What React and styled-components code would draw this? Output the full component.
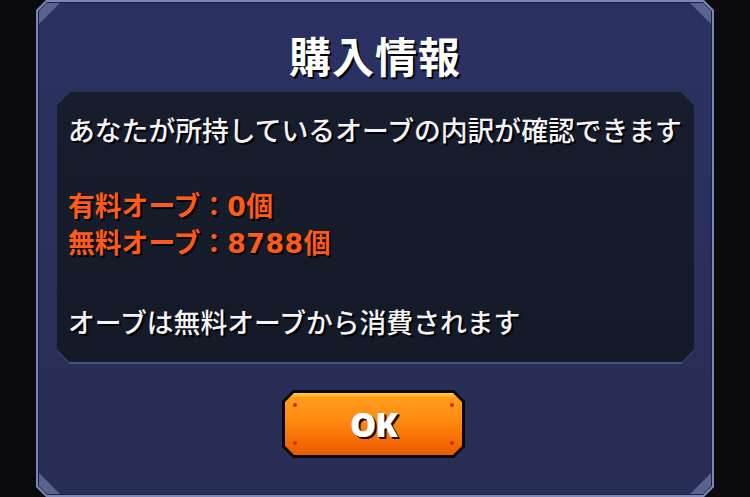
import React from 'react';
import styled, { createGlobalStyle } from 'styled-components';

const GlobalStyle = createGlobalStyle`
  html, body {
    margin: 0;
    padding: 0;
    background: #0c0c0e;
  }
  body {
    font-family: "Noto Sans CJK JP", "Noto Sans", sans-serif;
  }
`;

const chamfer = (n) =>
  `polygon(${n}px 0, calc(100% - ${n}px) 0, 100% ${n}px, 100% calc(100% - ${n}px), calc(100% - ${n}px) 100%, ${n}px 100%, 0 calc(100% - ${n}px), 0 ${n}px)`;

const Screen = styled.div`
  width: 750px;
  height: 497px;
  display: flex;
  justify-content: center;
  background: radial-gradient(ellipse at 50% 50%, #141416 0%, #0b0b0d 70%);
`;

const Frame = styled.div`
  width: 678px;
  height: 497px;
  padding: 2px;
  box-sizing: border-box;
  background: #7c87b9;
  clip-path: ${chamfer(10)};
`;

const FrameLine = styled.div`
  height: 100%;
  padding: 1px;
  box-sizing: border-box;
  background: #1b2040;
  clip-path: ${chamfer(9)};
`;

const Body = styled.div`
  position: relative;
  height: 100%;
  display: flex;
  flex-direction: column;
  background: linear-gradient(180deg, #2b3262 0%, #2a2f5a 55%, #282d55 100%);
  clip-path: ${chamfer(8)};
`;

const Corner = styled.div`
  position: absolute;
  width: 21px;
  height: 21px;
  background: #5a628e;
  ${(p) => (p.$top ? 'top: 0;' : 'bottom: 0;')}
  ${(p) => (p.$left ? 'left: 0;' : 'right: 0;')}
  clip-path: ${(p) =>
    p.$top && p.$left
      ? 'polygon(0 0, 100% 0, 0 100%)'
      : p.$top
      ? 'polygon(0 0, 100% 0, 100% 100%)'
      : p.$left
      ? 'polygon(0 0, 100% 100%, 0 100%)'
      : 'polygon(100% 0, 100% 100%, 0 100%)'};
`;

const Title = styled.h1`
  margin: 0;
  height: 89px;
  padding-top: 16px;
  box-sizing: border-box;
  text-align: center;
  color: #ffffff;
  font-size: 42px;
  font-weight: 700;
  line-height: 72px;
  letter-spacing: 1px;
  text-shadow: 2px 2px 0 #05060c, 1px 1px 0 #05060c;
`;

const InfoEdge = styled.div`
  margin: 0 17px 0 18px;
  height: 272px;
  padding-bottom: 2px;
  box-sizing: border-box;
  background: #4a5382;
  clip-path: ${chamfer(13)};
`;

const InfoBox = styled.div`
  height: 100%;
  padding: 20px 0 0 11px;
  box-sizing: border-box;
  background: linear-gradient(180deg, #181d2d 0%, #151a28 100%);
  clip-path: ${chamfer(12)};
`;

const Line = styled.p`
  margin: ${(p) => p.$top || 0}px 0 0;
  line-height: ${(p) => p.$h || 36}px;
  font-size: 26.8px;
  font-weight: ${(p) => (p.$accent ? 700 : 500)};
  white-space: nowrap;
  color: ${(p) => (p.$accent ? '#ff5b16' : '#f4f4f6')};
  text-shadow: 2px 2px 0 #000000, 1px 1px 0 #000000;
`;

const Num = styled.span`
  font-family: "DejaVu Sans", "Noto Sans CJK JP", sans-serif;
  font-weight: 700;
  letter-spacing: 0.5px;
`;

const ButtonRow = styled.div`
  display: flex;
  justify-content: center;
  padding-top: 26px;
  padding-right: 3px;
`;

const OkEdge = styled.button`
  position: relative;
  width: 183px;
  height: 68px;
  padding: 3px;
  border: none;
  box-sizing: border-box;
  background: #0a0604;
  clip-path: ${chamfer(11)};
  cursor: pointer;
`;

const OkFace = styled.div`
  position: relative;
  height: 100%;
  display: flex;
  align-items: center;
  justify-content: center;
  background: linear-gradient(180deg, #ffd23a 0%, #ff9c1c 8%, #ff8a10 45%, #f56a04 80%, #e85a02 100%);
  clip-path: ${chamfer(9)};
  color: #ffffff;
  font-family: "Noto Sans", "Liberation Sans", sans-serif;
  font-size: 33px;
  font-weight: 900;
  letter-spacing: -1px;
  text-shadow: 2px 2px 0 #1a0a00, 1px 1px 0 #1a0a00;
`;

const Rivet = styled.span`
  position: absolute;
  width: 4px;
  height: 4px;
  border-radius: 50%;
  background: #d42a06;
  ${(p) => (p.$top ? 'top: 10px;' : 'bottom: 10px;')}
  ${(p) => (p.$left ? 'left: 8px;' : 'right: 8px;')}
`;

export default function App() {
  return (
    <>
      <GlobalStyle />
      <Screen>
        <Frame>
          <FrameLine>
            <Body>
              <Corner $top $left />
              <Corner $top />
              <Corner $left />
              <Corner />
              <Title>購入情報</Title>
              <InfoEdge>
                <InfoBox>
                  <Line>あなたが所持しているオーブの内訳が確認できます</Line>
                  <Line $accent $top={39} $h={35}>
                    有料オーブ：<Num>0</Num>個
                    <br />
                    無料オーブ：<Num>8788</Num>個
                  </Line>
                  <Line $top={43}>オーブは無料オーブから消費されます</Line>
                </InfoBox>
              </InfoEdge>
              <ButtonRow>
                <OkEdge>
                  <OkFace>
                    <Rivet $top $left />
                    <Rivet $top />
                    <Rivet $left />
                    <Rivet />
                    OK
                  </OkFace>
                </OkEdge>
              </ButtonRow>
            </Body>
          </FrameLine>
        </Frame>
      </Screen>
    </>
  );
}
